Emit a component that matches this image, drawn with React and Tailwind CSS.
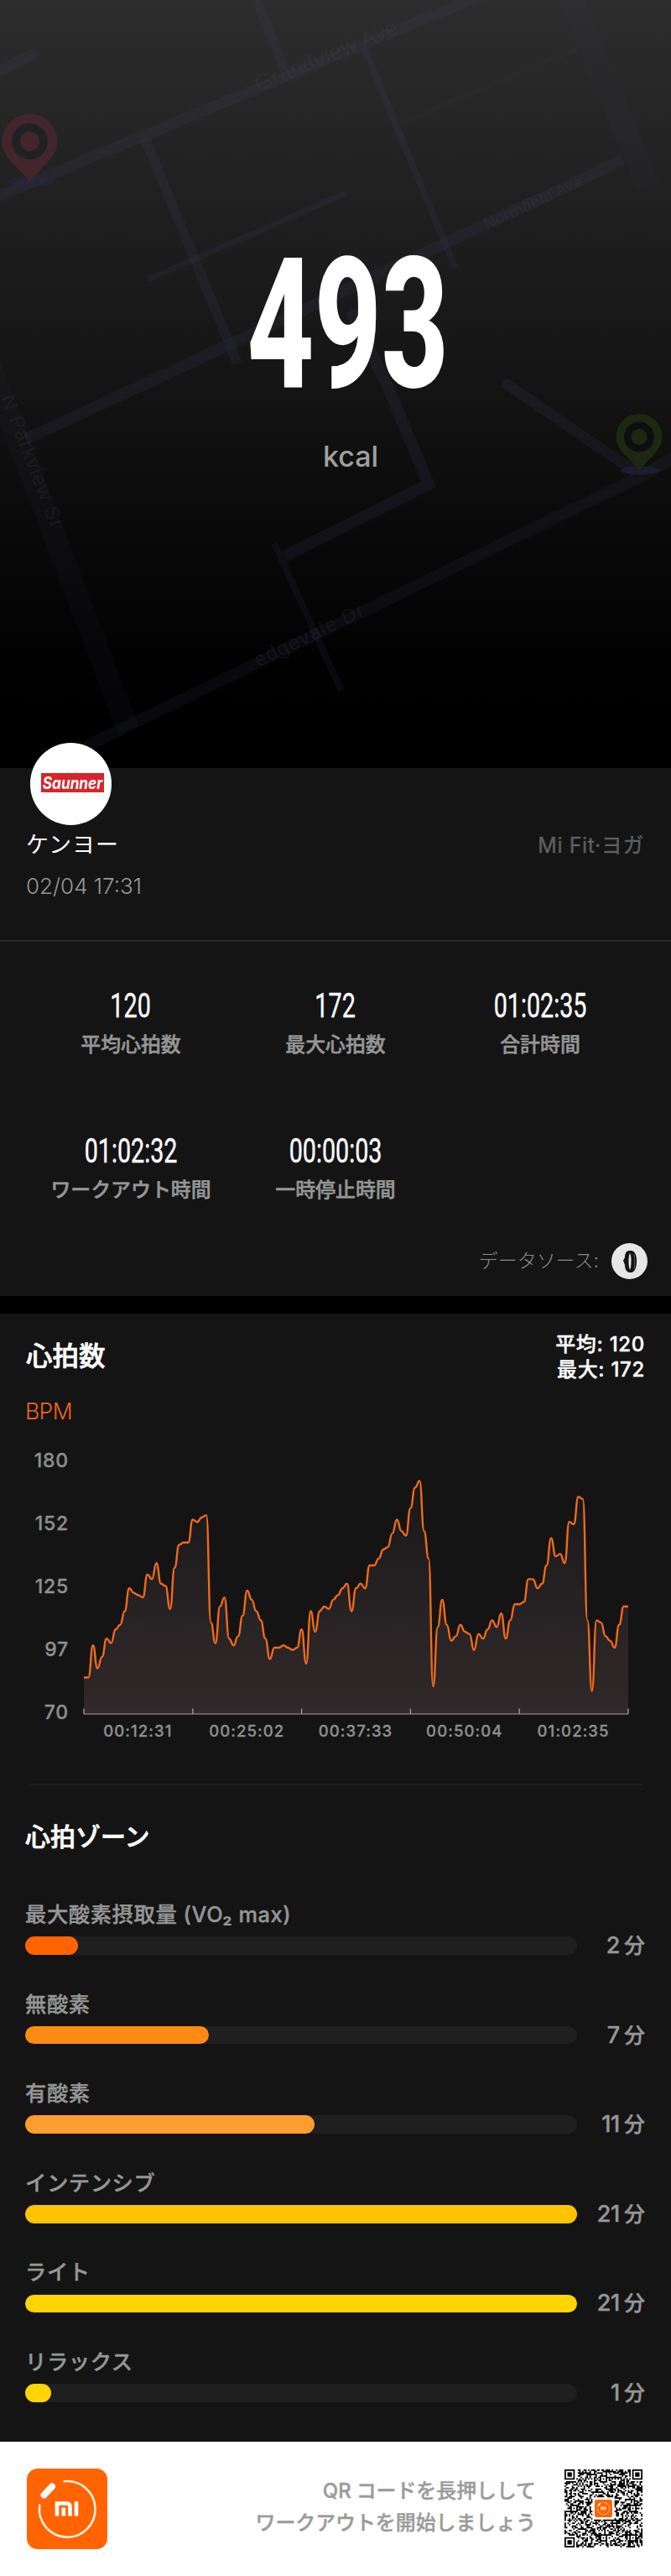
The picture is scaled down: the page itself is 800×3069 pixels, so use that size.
import clsx from 'clsx';

const STATS = [
    { value: '120', label: '平均心拍数' },
    { value: '172', label: '最大心拍数' },
    { value: '01:02:35', label: '合計時間' },
    { value: '01:02:32', label: 'ワークアウト時間' },
    { value: '00:00:03', label: '一時停止時間' },
];

const ZONES = [
    { label: '最大酸素摂取量 (VO₂ max)', minutes: 2, color: 'bg-[#ff6400]' },
    { label: '無酸素', minutes: 7, color: 'bg-[#ff8b12]' },
    { label: '有酸素', minutes: 11, color: 'bg-[#ff9d2e]' },
    { label: 'インテンシブ', minutes: 21, color: 'bg-[#ffc300]' },
    { label: 'ライト', minutes: 21, color: 'bg-[#ffd400]' },
    { label: 'リラックス', minutes: 1, color: 'bg-[#ffd400]' },
];

const MAX_MINUTES = 21;

const BPM = [
    86, 86, 100, 90, 95, 103, 101, 107, 109, 115, 125, 123, 122, 121, 131, 129, 136, 127, 126, 116,
    134, 144, 145, 145, 155, 154, 156, 157, 110, 101, 117, 121, 103, 100, 104, 113, 124, 120, 115, 111,
    103, 94, 99, 99, 100, 99, 98, 99, 107, 92, 115, 106, 115, 117, 116, 120, 122, 125, 127, 115,
    125, 127, 125, 135, 135, 138, 142, 143, 149, 155, 150, 148, 160, 169, 172, 150, 138, 82, 108, 120,
    109, 102, 104, 109, 106, 105, 98, 105, 103, 107, 111, 108, 114, 103, 111, 118, 118, 119, 129, 129,
    125, 127, 135, 147, 139, 140, 136, 154, 153, 165, 164, 111, 80, 111, 110, 104, 102, 99, 109, 117, 117,
];

const Y_LABELS = ['180', '152', '125', '97', '70'];
const X_LABELS = ['00:12:31', '00:25:02', '00:37:33', '00:50:04', '01:02:35'];

const CHART_W = 649;
const CHART_H = 300;

const pointX = (i) => (i * CHART_W) / (BPM.length - 1);
const pointY = (bpm) => CHART_H - (bpm - 70) * 2.723;

// Each step leaves and arrives horizontally
const linePath = BPM.reduce((d, bpm, i) => {
    if (i === 0) return `M0 ${pointY(bpm)}`;
    const mid = (pointX(i - 1) + pointX(i)) / 2;
    return `${d} C${mid} ${pointY(BPM[i - 1])} ${mid} ${pointY(bpm)} ${pointX(i)} ${pointY(bpm)}`;
}, '');

const Pin = ({ x, y, r, fill, hole }) => (
    <g transform={`translate(${x} ${y}) scale(${r / 33})`}>
        <ellipse cx="1" cy="48" rx="28" ry="6" fill="#25254a" opacity="0.5" />
        <path d="M0 -33A33 33 0 0 1 33 0C33 20 12 31 0 49C-12 31 -33 20 -33 0A33 33 0 0 1 0 -33Z" fill={fill} />
        <circle r="21.5" fill={hole} />
        <circle r="11.5" fill={fill} />
    </g>
);

const MapBackdrop = () => (
    <svg className="absolute inset-0" width="800" height="915" viewBox="0 0 800 915" fill="none">
        <g stroke="#43436a" strokeOpacity="0.15">
            <path d="M-10 237L580 -8" strokeWidth="13" />
            <path d="M304 -5L339 82" strokeWidth="12" />
            <path d="M-5 87L42 64" strokeWidth="14" />
            <path d="M173 165L283 433" strokeWidth="12" />
            <path d="M176 333L413 230" strokeWidth="7" />
            <path d="M434 57L543 320" strokeWidth="8" />
            <path d="M477 147L689 58" strokeWidth="7" strokeOpacity="0.07" />
            <path d="M680 -5L773 223" strokeWidth="29" strokeOpacity="0.08" />
            <path d="M742 191L530 290L275 410L31 523" strokeWidth="14" />
            <path d="M-14 430L153 870" strokeWidth="27" strokeOpacity="0.07" />
            <path d="M805 544L765 567L148 867L100 890" strokeWidth="14" strokeOpacity="0.12" />
            <path d="M418 370L462 460L511 577L339 663" strokeWidth="14" />
            <path d="M327 647L407 823" strokeWidth="8" strokeOpacity="0.12" />
            <path d="M600 455L757 562" strokeWidth="13" />
        </g>
        <g fill="#55555f" fillOpacity="0.17" className="font-['Liberation_Sans',sans-serif]">
            <text x="308" y="109" fontSize="26" textLength="182" transform="rotate(-22.5 308 109)">Grandview Ave</text>
            <text x="580" y="274" fontSize="19" textLength="128" transform="rotate(-24.5 580 274)">Northfield Ave</text>
            <text x="1" y="474" fontSize="24" textLength="166" transform="rotate(69 1 474)">N Parkview St</text>
            <text x="308" y="795" fontSize="24" textLength="142" transform="rotate(-26 308 795)">edgevale Dr</text>
        </g>
        <Pin x={35.5} y={168.5} r={33} fill="#42262b" hole="#212123" />
        <Pin x={762} y={520.5} r={27.5} fill="#1c2811" hole="#0e0e10" />
    </svg>
);

const Hero = () => (
    <section className="relative h-[915px] bg-[linear-gradient(180deg,#2d2d2d_0%,#232323_20%,#141414_50%,#0a0a0a_68%,#020202_85%,#000_95%)]">
        <MapBackdrop />
        <div className="relative flex flex-col items-center pt-[279px] pl-[29px]">
            <span className="inline-block h-[216px] scale-x-[0.64] font-['Roboto',sans-serif] text-[217px] leading-[216px] font-extrabold text-white">
                493
            </span>
            <span className="mt-[29px] pl-[7px] text-[34px] leading-[40px] font-medium text-[#a0a0a0]">kcal</span>
        </div>
    </section>
);

const Profile = () => (
    <section className="relative flex h-[207px] justify-between border-b-2 border-[#262626] pt-[72px] pr-8 pl-[31px]">
        <div className="absolute -top-[30px] left-9 flex h-[98px] w-[97px] items-center justify-center rounded-full bg-white">
            <div className="mt-[-3px] ml-[4px] flex h-[23px] w-[75px] items-center justify-center bg-[#d8232b]">
                <span className="inline-block scale-x-[0.86] text-[20px] leading-none font-bold text-white italic">Saunner</span>
            </div>
        </div>
        <div>
            <p className="text-[27px] leading-10 tracking-[0.9px] text-white">ケンヨー</p>
            <p className="mt-[9px] text-[26px] leading-10 font-light text-[#989898]">02/04 17:31</p>
        </div>
        <p className="text-[25px] leading-10 tracking-[0.6px] text-[#5f5f5f] [-webkit-text-stroke:0.4px]">Mi Fit·ヨガ</p>
    </section>
);

const StatItem = ({ value, label }) => (
    <div className="flex h-[173px] flex-col items-center">
        <span className="inline-block scale-x-[0.7] font-['Roboto',sans-serif] text-[41px] leading-[44px] whitespace-nowrap text-white [-webkit-text-stroke:0.4px]">
            {value}
        </span>
        <span className="mt-[9px] text-[23.9px] leading-8 font-medium whitespace-nowrap text-[#969696] [-webkit-text-stroke:0.5px]">
            {label}
        </span>
    </div>
);

const Summary = () => (
    <section className="h-[422px] px-[34px] pt-[54px]">
        <div className="grid grid-cols-3">
            {STATS.map((stat) => (
                <StatItem key={stat.label} {...stat} />
            ))}
        </div>
        <div className="mr-[-6px] -mt-[41px] flex items-center justify-end gap-[15px]">
            <span className="text-[23px] leading-[43px] font-light text-[#8a8a8a]">データソース:</span>
            <svg width="43" height="43" viewBox="0 0 43 43">
                <circle cx="21.5" cy="21.5" r="21.5" fill="#e6e6e6" />
                <path d="M14 21L16 17C16 12 18 9 21 9H24C28 10 30 14 30 21C30 29 28 34 24 35H21C18 34 16 31 16 26Z" fill="#141414" />
                <path d="M22 12C20 15 20 28 22 32C24 28 24 15 22 12Z" fill="#e6e6e6" />
                <path d="M27 13C28 18 28 26 27 31" stroke="#555" fill="none" />
            </svg>
        </div>
    </section>
);

const HeartRateChart = () => (
    <div className="flex">
        <div className="flex h-[330px] w-[82px] flex-col justify-between text-right text-[23px] leading-[30px] font-medium tracking-[0.8px] text-[#8f8f8f] [-webkit-text-stroke:0.3px]">
            {Y_LABELS.map((label) => (
                <span key={label}>{label}</span>
            ))}
        </div>
        <div className="ml-[17.5px] w-[649px] pt-[17px]">
            <svg className="overflow-visible" width="649" height="300" viewBox={`0 0 ${CHART_W} ${CHART_H}`} fill="none">
                <defs>
                    <linearGradient id="area" x1="0" y1="30" x2="0" y2="300" gradientUnits="userSpaceOnUse">
                        <stop offset="0" stopColor="#18181a" />
                        <stop offset="0.5" stopColor="#262223" />
                        <stop offset="0.9" stopColor="#2e2728" />
                        <stop offset="1" stopColor="#34282c" />
                    </linearGradient>
                </defs>
                <path d={`${linePath} V${CHART_H}H0Z`} fill="url(#area)" />
                <path d={linePath} stroke="#f16a1c" strokeWidth="2.4" strokeLinejoin="round" />
                <path d={`M0 ${CHART_H}H${CHART_W}`} stroke="#7d7577" strokeWidth="1.5" />
                {[0, 1, 2, 3, 4, 5].map((i) => (
                    <path key={i} d={`M${(i * CHART_W) / 5} 293.5V300`} stroke="#9d9798" strokeWidth="1.4" />
                ))}
            </svg>
            <div className="mt-[6px] grid grid-cols-5 text-center text-[18.5px] leading-7 font-medium tracking-[1.1px] text-[#8f8f8f] [-webkit-text-stroke:0.3px]">
                {X_LABELS.map((label) => (
                    <span key={label}>{label}</span>
                ))}
            </div>
        </div>
    </div>
);

const HeartRate = () => (
    <section className="h-[560px]">
        <div className="flex h-[96px] items-start justify-between pr-[31px] pl-[31px]">
            <h2 className="pt-[31px] text-[31.5px] leading-10 font-medium text-white [-webkit-text-stroke:0.7px]">心拍数</h2>
            <div className="pt-[22px] text-right text-[24px] leading-[30px] font-medium tracking-[0.7px] text-white [-webkit-text-stroke:0.4px]">
                <p>平均: 120</p>
                <p>最大: 172</p>
            </div>
        </div>
        <p className="h-[64px] pl-[30px] text-[26.5px] leading-[40px] font-light tracking-[-0.6px] text-[#f2651a]">BPM</p>
        <HeartRateChart />
    </section>
);

const ZoneRow = ({ label, minutes, color }) => (
    <div className="h-[106.6px]">
        <p className="text-[25.3px] leading-9 font-medium tracking-[0.6px] text-[#969696] [-webkit-text-stroke:0.4px]">{label}</p>
        <div className="mt-[1px] flex h-9 items-center justify-between">
            <div className="h-[21.5px] w-[658px] rounded-full bg-[#1f1f1f]">
                <div className={clsx('h-full rounded-full', color)} style={{ width: `${(minutes / MAX_MINUTES) * 100}%` }} />
            </div>
            <p className="flex items-center gap-[5px] text-[#969696] [-webkit-text-stroke:0.4px]">
                <span className="text-[27px] leading-9 font-medium tracking-[-0.3px]">{minutes}</span>
                <span className="text-[25px] leading-9 font-medium">分</span>
            </p>
        </div>
    </div>
);

const HeartZones = () => (
    <section className="h-[784px] pr-[31px] pl-[30px]">
        <div className="ml-1 h-[2px] w-[732px] bg-[#202020]" />
        <h2 className="mt-[41px] mb-[55px] text-[30px] leading-10 font-medium text-white [-webkit-text-stroke:0.7px]">心拍ゾーン</h2>
        {ZONES.map((zone) => (
            <ZoneRow key={zone.label} {...zone} />
        ))}
    </section>
);

const MiFitLogo = ({ className }) => (
    <svg className={className} viewBox="0 0 96 96" fill="none">
        <rect width="96" height="96" rx="13" fill="#ff6400" />
        <path d="M44.5 15.3A33.3 33.3 0 1 1 15.3 43.5" stroke="#fff0e2" strokeWidth="2.6" strokeLinecap="round" />
        <path d="M20.5 31.5L30 21.5" stroke="#fff" strokeWidth="8" strokeLinecap="round" />
        <path d="M36 56.5V41.5H47.5Q51.5 41.5 51.5 45.5V56.5M43.8 46.5V56.5M59 39.3V56.5" stroke="#fff" strokeWidth="4.6" />
    </svg>
);

const QR_SIZE = 53;

const inFinder = (x, y) => (x < 8 && y < 8) || (x > 44 && y < 8) || (x < 8 && y > 44);

const qrModules = (() => {
    let d = '';
    let seed = 20210204;
    const marks = [[6, 26], [26, 6], [26, 46], [46, 26], [46, 46]];
    for (let y = 0; y < QR_SIZE; y++) {
        for (let x = 0; x < QR_SIZE; x++) {
            seed = (Math.imul(seed, 1664525) + 1013904223) >>> 0;
            let on = (seed >>> 16) % 100 < 50;
            if (x === 6 || y === 6) on = (x + y) % 2 === 0;
            const mark = marks.find(([mx, my]) => Math.abs(mx - x) < 3 && Math.abs(my - y) < 3);
            if (mark) on = Math.max(Math.abs(mark[0] - x), Math.abs(mark[1] - y)) !== 1;
            if (inFinder(x, y) || (Math.abs(x - 26) < 8 && Math.abs(y - 26) < 8)) on = false;
            if (on) d += `M${x} ${y}h1v1h-1z`;
        }
    }
    [[0, 0], [46, 0], [0, 46]].forEach(([x, y]) => {
        d += `M${x} ${y}h7v7h-7zM${x + 1} ${y + 1}v5h5v-5zM${x + 2} ${y + 2}h3v3h-3z`;
    });
    return d;
})();

const QrCode = () => (
    <div className="relative h-[93px] w-[93px]">
        <svg width="93" height="93" viewBox={`0 0 ${QR_SIZE} ${QR_SIZE}`}>
            <path d={qrModules} fill="#000" />
        </svg>
        <MiFitLogo className="absolute top-[36px] left-[36px] h-[21px] w-[21px]" />
    </div>
);

const Footer = () => (
    <footer className="flex h-[160px] items-start bg-white pr-[34px] pl-8">
        <MiFitLogo className="mt-8 h-24 w-24" />
        <p className="mt-10 mr-[34px] ml-auto text-right text-[23.9px] leading-[38px] font-medium text-[#9b9b9b] [-webkit-text-stroke:0.4px]">
            <span className="mr-[6px]">QR</span>コードを長押しして
            <br />
            ワークアウトを開始しましょう
        </p>
        <div className="mt-[33px]">
            <QrCode />
        </div>
    </footer>
);

export default function App() {
    return (
        <main className="h-[3069px] w-[800px] overflow-hidden bg-[#141414] font-['Inter','Noto_Sans_CJK_JP',sans-serif]">
            <Hero />
            <Profile />
            <Summary />
            <div className="h-[21px] bg-black" />
            <HeartRate />
            <HeartZones />
            <Footer />
        </main>
    );
}
